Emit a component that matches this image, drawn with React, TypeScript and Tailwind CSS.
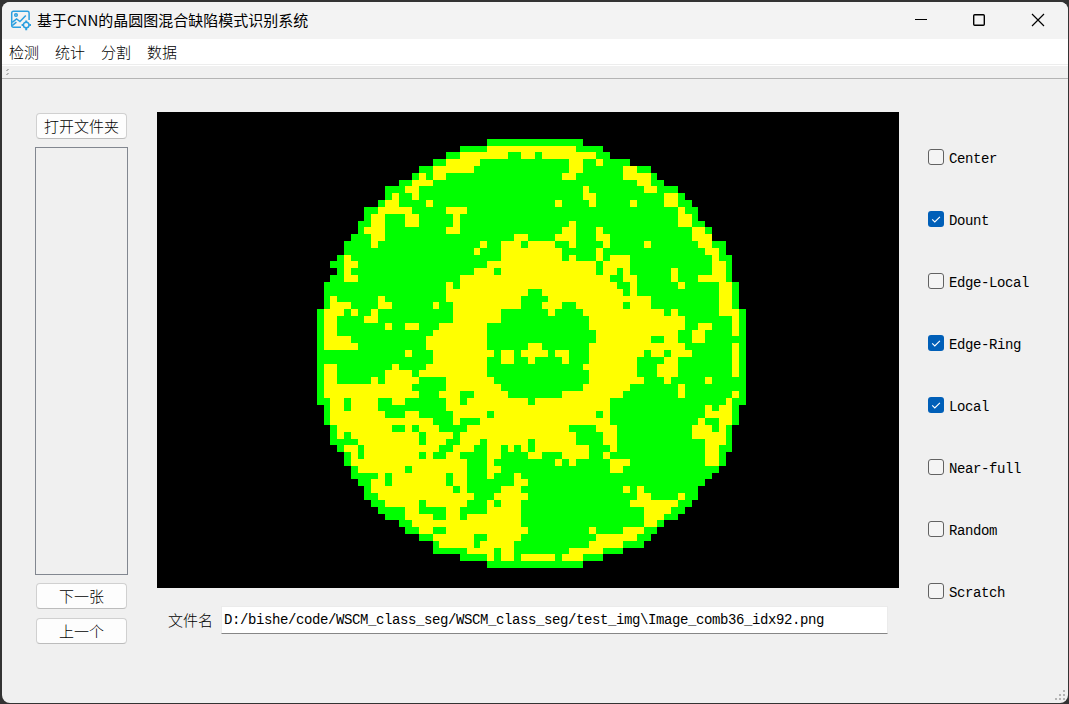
import React from "react";

// Each wafer row: "start-end" of the die area, then the failing runs inside it.
const ROWS = `25-39
21-42|25-38
19-43|21-28 30-32 33-41
17-46|19-24 37-39 41-42
15-49|17-23 37-39 45-47
14-50|15-16 17-19 36-38 45-49
12-51|14-17 47-49
10-53|13-15 39-40 48-50
10-54|11-12 14-15 39-41 51-53
9-55|10-12 16-17 35-36 40-41 46-47 51-53
7-56|9-14 19-22 53-54
7-56|8-10 13-15 20-21 53-55
6-57|8-10 13-15 20-21 37-38 53-55
6-58|7-10 19-21 36-38 41-42 55-57
5-58|8-10 29-31 35-38 41-43 55-58
4-60|8-9 24-25 27-30 31-35 37-38 42-43 48-49 56-58
4-60|23-24 27-36 41-42 57-59
3-61|4-5 27-36 37-38 41-42 43-46 58-59
2-61|4-6 25-41 42-46 58-60
3-61|4-5 23-26 27-41 42-44 45-46 52-53 58-60
2-61|4-6 21-43 45-47 52-53 56-60
1-62|19-20 21-44 46-47 53-54 59-61
1-62|19-31 33-45 46-47 59-61
1-62|2-3 9-10 19-30 34-49 59-61
1-62|2-5 9-11 17-18 20-30 33-36 38-45 46-49 59-61
0-63|1-4 5-6 8-9 20-27 34-35 39-51 52-53 59-62
0-63|1-3 7-9 20-27 40-54 61-62
0-63|1-3 10-11 13-15 18-25 40-54 56-58 61-62
0-63|1-3 17-25 41-53 55-57 61-62
0-63|1-5 16-25 41-49 51-53 55-57
0-63|1-6 16-25 31-33 40-54 61-62
0-63|13-14 17-26 27-29 30-34 35-37 40-48 49-51 52-55 61-62
0-63|17-25 27-29 31-32 36-37 40-47 51-53 61-62
0-63|1-3 11-12 16-25 39-47 50-53 61-62
0-63|1-3 10-14 15-25 40-47 50-53 61-62
0-63|1-3 8-9 10-15 19-26 40-48 51-52 57-58
0-63|1-14 19-27 39-46 53-54
0-63|1-15 18-21 23-28 36-45 53-54 61-62
0-63|2-4 5-9 11-13 19-21 22-31 32-43 60-61
1-62|2-4 5-9 19-43 57-58 59-61
1-62|2-10 13-15 20-25 26-41 42-43 57-61
1-62|2-17 20-21 24-43 56-57 59-61
2-61|3-11 13-14 15-18 22-37 41-44 55-58 59-60
2-61|3-4 5-15 16-20 21-38 42-44 55-60
2-61|6-15 16-19 21-24 25-31 32-38 42-44 57-60
3-61|4-6 7-18 20-23 25-27 28-29 30-31 32-40 43-44 57-59
4-60|5-6 7-15 16-17 19-21 25-27 31-33 36-40 42-43 57-59
4-60|5-22 25-26 35-36 37-38 43-46 57-59
5-59|6-13 14-22 25-27 43-45
5-58|9-10 11-19 20-22 25-26 29-30
6-57|8-10 11-19 20-22 29-31
7-56|8-20 21-22 27-30 45-46 47-48
7-56|9-23 26-31 47-49 53-54
8-55|10-15 16-22 25-26 27-30 46-53
9-54|13-15 19-21 25-30 48-52
10-53|13-17 19-21 22-30 48-51
12-51|14-30 48-50
13-50|15-17 19-31 40-41 45-48
15-49|17-23 25-30 41-47
17-48|18-23 24-29 40-45
17-45|22-26 27-29 37-42
21-42|25-26 27-29 30-35 36-39
25-39`.split("\n");

const DIE = 6.814;
const px = (k: number) => Math.round(159.78 + k * DIE);
const py = (k: number) => Math.round(26.78 + k * DIE);

function run(text: string, row: number) {
  const [a, b] = text.split("-").map(Number);
  return `M${px(a)} ${py(row)}H${px(b)}V${py(row + 1)}H${px(a)}Z`;
}

const PASS = ROWS.map((r, i) => run(r.split("|")[0], i)).join("");
const FAIL = ROWS.map((r, i) =>
  (r.split("|")[1] ?? "").split(" ").filter(Boolean).map((t) => run(t, i)).join("")
).join("");

function WaferMap() {
  return (
    <svg width="742" height="476" shapeRendering="crispEdges" className="block bg-black">
      <path d={PASS} fill="#00ff00" />
      <path d={FAIL} fill="#ffff00" />
    </svg>
  );
}

function AppIcon() {
  return (
    <svg width="22" height="22" viewBox="0 0 22 22" fill="none" stroke="#2b9fe0" strokeWidth="1.5">
      <path d="M11 17.2H3.4A1.7 1.7 0 0 1 1.7 15.5V2.9A1.7 1.7 0 0 1 3.4 1.2H17.4A1.7 1.7 0 0 1 19.1 2.9V10" />
      <circle cx="6" cy="5" r="1.3" />
      <path d="M2.2 12.4L6.6 9L10 11.6L15.8 5.4" />
      <path d="M2.2 15.6L6.4 12.2" />
      <circle cx="16.2" cy="15" r="2.8" />
      <path d="M16.2 10.4V12M16.2 18V20.2M11.6 15H13.2M19.2 15H21" strokeWidth="2" />
    </svg>
  );
}

const MONO = "font-['Liberation_Mono','Noto_Sans_CJK_SC',monospace]";

function PushButton({ children, className = "" }: { children: React.ReactNode; className?: string }) {
  return (
    <button
      className={`ml-px flex h-[26px] w-[91px] items-center justify-center rounded-[4px] border border-[#d0d0d0] border-b-[#bcbcbc] bg-[#fdfdfd] pb-[2px] text-[15px] leading-none font-light ${className}`}
    >
      {children}
    </button>
  );
}

const DEFECTS: [string, boolean][] = [
  ["Center", false],
  ["Dount", true],
  ["Edge-Local", false],
  ["Edge-Ring", true],
  ["Local", true],
  ["Near-full", false],
  ["Random", false],
  ["Scratch", false],
];

function DefectCheck({ label, checked }: { label: string; checked: boolean }) {
  return (
    <label className="flex h-4 items-center gap-[5px]">
      {checked ? (
        <span className="flex size-4 shrink-0 items-center justify-center rounded-[3px] bg-[#005fb8]">
          <svg width="16" height="16" fill="none" stroke="#fff" strokeWidth="1.1">
            <path d="M4.2 8.3L6.8 10.9L11.9 5.8" />
          </svg>
        </span>
      ) : (
        <span className="size-4 shrink-0 rounded-[3px] border border-[#626262] bg-[#f4f4f4]" />
      )}
      <span className={`${MONO} pt-1 text-[14px] leading-4 tracking-[-0.4px] whitespace-nowrap`}>{label}</span>
    </label>
  );
}

export default function App() {
  return (
    <div className="h-[704px] w-[1069px] overflow-hidden bg-[#333333] pt-[2px] pr-px pb-px pl-[2px] font-['Noto_Sans_CJK_SC',sans-serif] text-black">
      <div className="relative flex h-[701px] w-[1066px] flex-col overflow-hidden rounded-[8px] bg-[#f0f0f0]">
        <header className="flex h-[37px] shrink-0 items-center bg-[#f3f3f3] pl-2">
          <AppIcon />
          <h1 className="ml-[5px] pb-[3px] text-[15px] leading-none whitespace-nowrap">基于CNN的晶圆图混合缺陷模式识别系统</h1>
          <div className="ml-auto flex items-center">
            <svg width="160" height="37" fill="none" stroke="#000" className="block">
              <path d="M7 17.5H19" />
              <rect x="65.7" y="12.7" width="10.6" height="10.6" rx="1" strokeWidth="1.4" />
              <path d="M124 12L136 24M136 12L124 24" strokeWidth="1.2" />
            </svg>
          </div>
        </header>

        <nav className="flex h-[26px] shrink-0 items-center gap-4 border-b border-[#ededed] bg-white pl-[7px] text-[15px] leading-none font-light">
          <span>检测</span>
          <span>统计</span>
          <span>分割</span>
          <span>数据</span>
        </nav>

        <div className="flex h-[14px] shrink-0 items-center border-t border-b border-t-white border-b-[#b4b4b4] pl-1">
          <svg width="4" height="8" fill="#b4b4b4" className="block">
            <path d="M1 1h2v1H1zM0 2h2v1H0zM1 5h2v1H1zM0 6h2v1H0z" />
          </svg>
        </div>

        <main className="flex flex-1 items-start pl-[33px]">
          <section className="mt-[34px] flex w-[93px] flex-col">
            <PushButton>打开文件夹</PushButton>
            <div className="mt-2 h-[428px] border border-[#828790]" />
            <PushButton className="mt-2">下一张</PushButton>
            <PushButton className="mt-[9px]">上一个</PushButton>
          </section>

          <section className="mt-[33px] ml-[29px] w-[742px]">
            <WaferMap />
            <div className="mt-[18px] flex h-7 items-center pl-[11px]">
              <span className="w-[53px] pb-[2px] text-[15px] leading-none font-light">文件名</span>
              <div
                className={`${MONO} flex h-7 w-[667px] items-center border border-[#ebebeb] border-b-[#868686] bg-white pl-[2px] text-[14px] tracking-[-0.4px] whitespace-nowrap`}
              >
                {"D:/bishe/code/WSCM_class_seg/WSCM_class_seg/test_img\\Image_comb36_idx92.png"}
              </div>
            </div>
          </section>

          <section className="mt-[70px] ml-[29px] flex flex-col gap-[46px]">
            {DEFECTS.map(([label, checked]) => (
              <DefectCheck key={label} label={label} checked={checked} />
            ))}
          </section>
        </main>

        <svg width="12" height="12" fill="#b4b4b4" className="absolute right-px bottom-px">
          <path d="M8 0h2v2H8zM4 4h2v2H4zM8 4h2v2H8zM0 8h2v2H0zM4 8h2v2H4zM8 8h2v2H8z" />
        </svg>
      </div>
    </div>
  );
}
